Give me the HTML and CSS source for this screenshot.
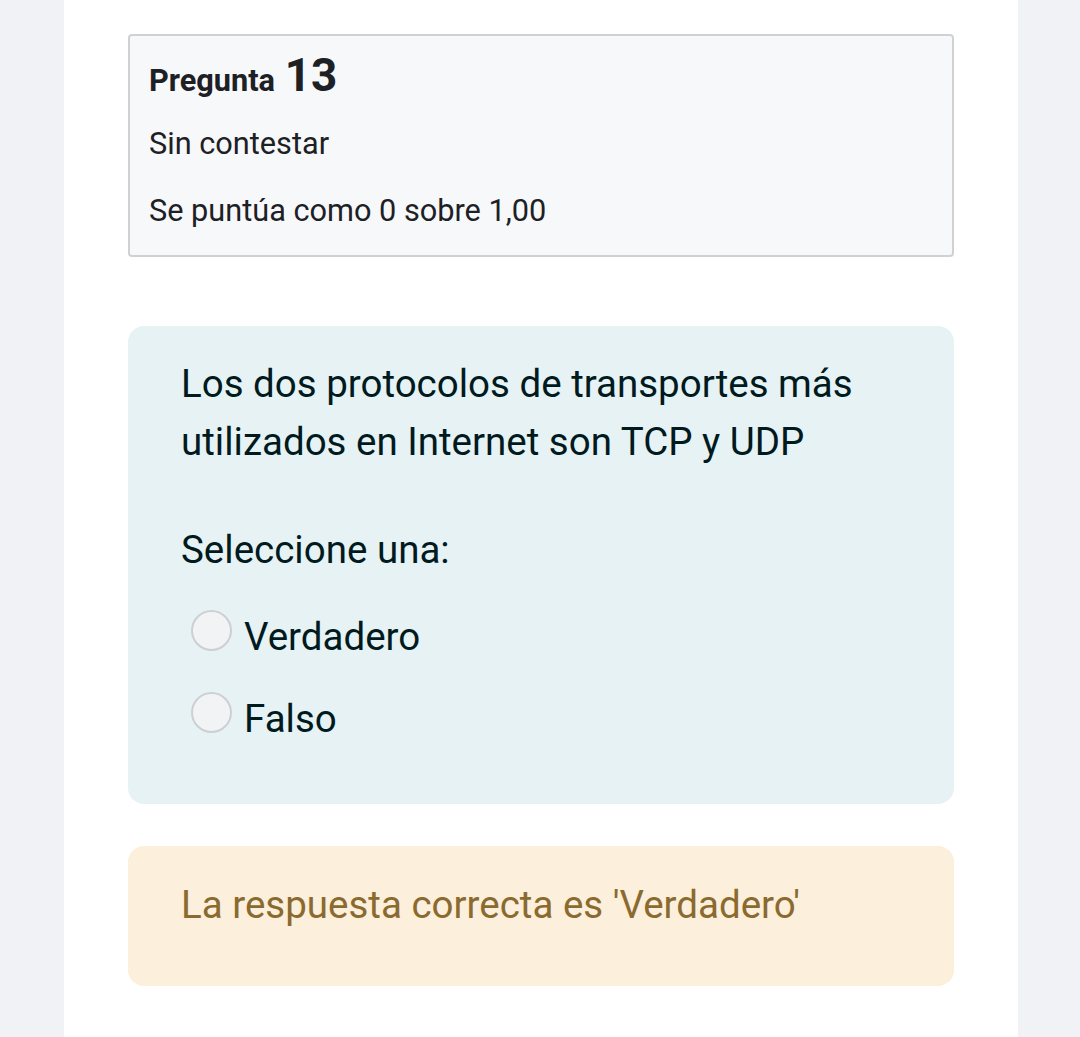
FILE: index.html
```html
<!DOCTYPE html>
<html lang="es">
<head>
<meta charset="utf-8">
<link rel="stylesheet" href="styles.css">
</head>
<body>
<div class="page">
  <main class="content">
    <section class="info">
      <h3 class="qno"><span class="label">Pregunta</span> <span class="num">13</span></h3>
      <div class="state">Sin contestar</div>
      <div class="grade">Se puntúa como 0 sobre 1,00</div>
    </section>
    <section class="formulation">
      <p class="qtext">Los dos protocolos de transportes más utilizados en Internet son TCP y UDP</p>
      <div class="prompt">Seleccione una:</div>
      <div class="answers">
        <label class="option"><span class="radio"></span><span>Verdadero</span></label>
        <label class="option"><span class="radio"></span><span>Falso</span></label>
      </div>
    </section>
    <section class="feedback">
      <div class="rightanswer">La respuesta correcta es 'Verdadero'</div>
    </section>
  </main>
</div>
</body>
</html>
```
FILE: styles.css
```css
html, body {
  margin: 0;
  padding: 0;
  background: #f1f2f6;
  font-family: Roboto, "Liberation Sans", sans-serif;
}
.page {
  display: flex;
  justify-content: flex-start;
  padding-left: 64px;
  height: 1037px;
  overflow: hidden;
}
.content {
  width: 954px;
  background: #ffffff;
  box-sizing: border-box;
  padding: 34px 64px 0 64px;
}
.info {
  background: #f7f8fa;
  border: 2px solid #cfd1d4;
  border-radius: 4px;
  padding: 15px 19px 24px 19px;
  color: #1d2125;
}
.qno {
  margin: 0;
  font-weight: 700;
  font-size: 30.7px;
  line-height: 50px;
}
.qno .num {
  font-size: 45.8px;
  margin-left: 2px;
}
.state {
  font-size: 30.7px;
  margin-top: 18px;
  line-height: 40px;
}
.grade {
  font-size: 30.7px;
  margin-top: 27px;
  line-height: 40px;
}
.formulation {
  margin-top: 69px;
  background: #e7f2f5;
  border-radius: 16px;
  padding: 29px 53px 56px 53px;
  color: #001a1e;
}
.qtext {
  margin: 0;
  font-size: 38.5px;
  line-height: 58px;
}
.prompt {
  margin-top: 50px;
  font-size: 38.5px;
  line-height: 58px;
}
.answers {
  margin-top: 29px;
  display: flex;
  flex-direction: column;
  gap: 24px;
}
.option {
  display: flex;
  align-items: flex-start;
  gap: 12px;
  font-size: 38.5px;
  line-height: 58px;
  padding-left: 10px;
}
.radio {
  width: 37px;
  height: 37px;
  margin-top: 2px;
  border: 2px solid #cdd0d3;
  border-radius: 50%;
  background: #f1f3f5;
  flex: none;
}
.feedback {
  margin-top: 42px;
  background: #fcefdc;
  border-radius: 16px;
  padding: 34px 53px 56px 53px;
  color: #8a6a2f;
}
.rightanswer {
  font-size: 38.5px;
  line-height: 50px;
}
```
